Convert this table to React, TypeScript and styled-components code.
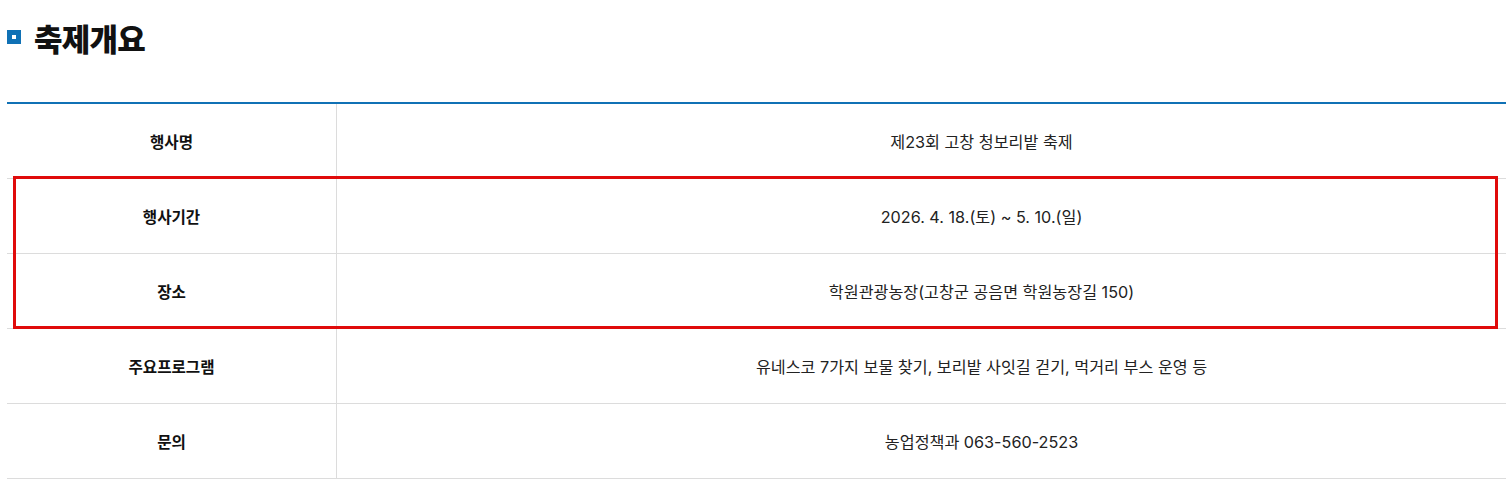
import * as React from 'react'
import styled, { createGlobalStyle } from 'styled-components'

const GlobalStyle = createGlobalStyle`
  html, body {
    margin: 0;
    padding: 0;
    background: #fff;
    overflow: hidden;
  }
  body {
    font-family: Inter, "Noto Sans CJK KR", "Noto Sans", sans-serif;
    color: #222;
  }
`

const Section = styled.section`
  position: relative;
  padding: 0 0 0 7px;
  width: 1506px;
  box-sizing: border-box;
  overflow: hidden;
`

const Heading = styled.h2`
  display: flex;
  align-items: center;
  gap: 13px;
  margin: 0;
  height: 74px;
  font-size: 31px;
  font-weight: 900;
  letter-spacing: -0.8px;
  color: #111;
`

const Bullet = styled.span`
  display: inline-block;
  width: 14px;
  height: 14px;
  box-sizing: border-box;
  border: 5px solid #1071b5;
  background: #fff;
  flex-shrink: 0;
`

const Table = styled.div`
  margin-top: 28px;
  width: 1619px;
  border-top: 2px solid #1071b5;
`

const Row = styled.div`
  display: grid;
  grid-template-columns: 330px 1fr;
  height: 75px;
  box-sizing: border-box;
  border-bottom: 1px solid #dcdcdc;
`

const Label = styled.div`
  display: flex;
  align-items: center;
  justify-content: center;
  border-right: 1px solid #dcdcdc;
  font-size: 15.6px;
  font-weight: 700;
  color: #111;
`

const Value = styled.div`
  display: flex;
  align-items: center;
  justify-content: center;
  font-size: 16.2px;
  color: #222;
`

const Highlight = styled.div`
  position: absolute;
  left: 13px;
  top: 176px;
  width: 1485px;
  height: 153px;
  box-sizing: border-box;
  border: 3px solid #e00b0b;
  pointer-events: none;
`

const rows = [
  { label: '행사명', value: '제23회 고창 청보리밭 축제' },
  { label: '행사기간', value: '2026. 4. 18.(토) ~ 5. 10.(일)' },
  { label: '장소', value: '학원관광농장(고창군 공음면 학원농장길 150)' },
  { label: '주요프로그램', value: '유네스코 7가지 보물 찾기, 보리밭 사잇길 걷기, 먹거리 부스 운영 등' },
  { label: '문의', value: '농업정책과 063-560-2523' },
]

const App: React.FunctionComponent = () => {
  return (
    <>
      <GlobalStyle />
      <Section>
        <Heading>
          <Bullet />
          축제개요
        </Heading>
        <Table>
          {rows.map(row => (
            <Row key={row.label}>
              <Label>{row.label}</Label>
              <Value>{row.value}</Value>
            </Row>
          ))}
        </Table>
        <Highlight />
      </Section>
    </>
  )
}

export default App
